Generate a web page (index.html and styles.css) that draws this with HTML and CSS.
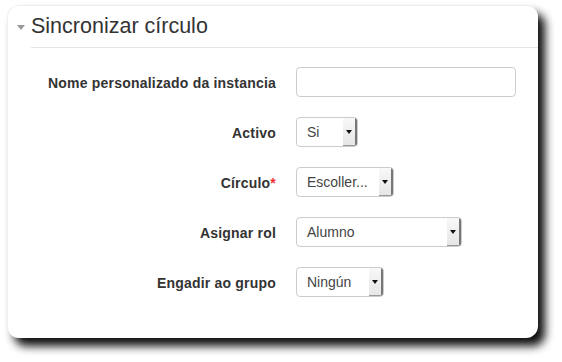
FILE: index.html
```html
<!DOCTYPE html>
<html lang="gl">
<head>
    <meta charset="UTF-8">
    <title>Sincronizar círculo</title>
    <link rel="stylesheet" href="styles.css">
</head>
<body>
    <div class="card">
        <div class="legend">
            <span class="toggle"></span>
            <h2>Sincronizar círculo</h2>
        </div>
        <form class="form">
            <label class="label" for="instanceName">Nome personalizado da instancia</label>
            <div class="control"><input type="text" id="instanceName" class="text-input"></div>

            <label class="label">Activo</label>
            <div class="control">
                <div class="select w-si"><span class="value">Si</span><span class="arrow"></span></div>
            </div>

            <label class="label">Círculo<span class="req">*</span></label>
            <div class="control">
                <div class="select w-escoller"><span class="value">Escoller...</span><span class="arrow"></span></div>
            </div>

            <label class="label">Asignar rol</label>
            <div class="control">
                <div class="select w-alumno"><span class="value">Alumno</span><span class="arrow"></span></div>
            </div>

            <label class="label">Engadir ao grupo</label>
            <div class="control">
                <div class="select w-ningun"><span class="value">Ningún</span><span class="arrow"></span></div>
            </div>
        </form>
    </div>
</body>
</html>
```

FILE: styles.css
```css
html, body {
    height: 100%;
}
body {
    margin: 0;
    padding: 0;
    background-color: #fff;
    font-family: "Liberation Sans", Arial, sans-serif;
    color: #333;
    overflow: hidden;
}
.card {
    margin: 5px 0 0 7px;
    width: 531px;
    height: 333px;
    box-sizing: border-box;
    background-color: #fff;
    border-top: 1px solid #f0f0f0;
    border-left: 1px solid #f0f0f0;
    border-radius: 12px;
    box-shadow: 7px 8px 10px rgba(0, 0, 0, 0.95);
}
.legend {
    display: flex;
    align-items: center;
    margin-left: 9px;
    height: 41px;
}
.toggle {
    width: 0;
    height: 0;
    border-left: 4.5px solid transparent;
    border-right: 4.5px solid transparent;
    border-top: 5px solid #999;
    margin-right: 6px;
    margin-top: 1px;
}
.legend h2 {
    margin: 0;
    font-size: 21.5px;
    font-weight: normal;
    color: #333;
    flex: 1;
    border-bottom: 1px solid #e5e5e5;
    line-height: 41px;
    margin-top: 1px;
}
.form {
    display: grid;
    grid-template-columns: 268px 1fr;
    column-gap: 20px;
    row-gap: 20px;
    margin-top: 20px;
}
.label {
    font-size: 14px;
    letter-spacing: 0.2px;
    font-weight: bold;
    text-align: right;
    align-self: center;
    color: #333;
    padding-top: 1px;
}
.req {
    color: #e33;
}
.control {
    height: 30px;
    display: flex;
    align-items: center;
}
.text-input {
    width: 220px;
    height: 30px;
    box-sizing: border-box;
    border: 1px solid #ccc;
    border-radius: 4px;
    margin: 0;
}
.select {
    height: 30px;
    box-sizing: border-box;
    border: 1px solid #ccc;
    border-radius: 4px;
    display: flex;
    font-size: 14px;
    color: #444;
    overflow: hidden;
}
.select .value {
    flex: 1;
    padding-left: 10px;
    line-height: 28px;
}
.select .arrow {
    width: 12px;
    position: relative;
    background: linear-gradient(to bottom, #f8f8f8, #e6e6e6);
    border-right: 2px solid #777;
    border-bottom: 1px solid #999;
}
.select .arrow::after {
    content: "";
    position: absolute;
    left: 3px;
    top: 12px;
    border-left: 3px solid transparent;
    border-right: 3px solid transparent;
    border-top: 4px solid #111;
}
.w-si { width: 62px; }
.w-escoller { width: 98px; }
.w-alumno { width: 166px; }
.w-ningun { width: 88px; }
```
